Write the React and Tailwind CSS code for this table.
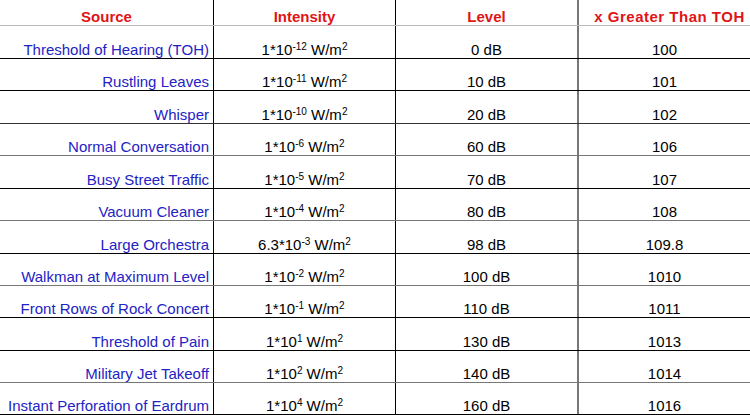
const rows = [
  { src: "Threshold of Hearing (TOH)", base: "1*10", exp: "-12", level: "0 dB", times: "100", h: "h-[33px]", line: "border-black" },
  { src: "Rustling Leaves", base: "1*10", exp: "-11", level: "10 dB", times: "101", h: "h-[32px]", line: "border-black" },
  { src: "Whisper", base: "1*10", exp: "-10", level: "20 dB", times: "102", h: "h-[33px]", line: "border-[#333]" },
  { src: "Normal Conversation", base: "1*10", exp: "-6", level: "60 dB", times: "106", h: "h-[32px]", line: "border-[#777]" },
  { src: "Busy Street Traffic", base: "1*10", exp: "-5", level: "70 dB", times: "107", h: "h-[33px]", line: "border-black" },
  { src: "Vacuum Cleaner", base: "1*10", exp: "-4", level: "80 dB", times: "108", h: "h-[32px]", line: "border-[#777]" },
  { src: "Large Orchestra", base: "6.3*10", exp: "-3", level: "98 dB", times: "109.8", h: "h-[33px]", line: "border-black" },
  { src: "Walkman at Maximum Level", base: "1*10", exp: "-2", level: "100 dB", times: "1010", h: "h-[32px]", line: "border-[#777]" },
  { src: "Front Rows of Rock Concert", base: "1*10", exp: "-1", level: "110 dB", times: "1011", h: "h-[32px]", line: "border-black" },
  { src: "Threshold of Pain", base: "1*10", exp: "1", level: "130 dB", times: "1013", h: "h-[33px]", line: "border-black" },
  { src: "Military Jet Takeoff", base: "1*10", exp: "2", level: "140 dB", times: "1014", h: "h-[32px]", line: "border-[#777]" },
  { src: "Instant Perforation of Eardrum", base: "1*10", exp: "4", level: "160 dB", times: "1016", h: "h-[32px]", line: "border-black" },
];

const cols = "grid grid-cols-[214px_182px_183px_171px]";

function Header() {
  return (
    <div className={`${cols} h-[26px] border-b border-[#bbb] text-[15px] leading-[17px] font-bold text-[#e01515]`}>
      <div className="flex items-end justify-center border-r border-black">Source</div>
      <div className="flex items-end justify-center border-r border-black">Intensity</div>
      <div className="flex items-end justify-center border-r-2 border-[#777]">Level</div>
      <div className="flex items-end justify-center pl-[10px] tracking-[0.5px] whitespace-nowrap">x Greater Than TOH</div>
    </div>
  );
}

function Row({ r }) {
  return (
    <div className={`${cols} ${r.h} border-b ${r.line} text-[15px] leading-[17px]`}>
      <div className="flex items-end justify-end pr-[4px] border-r border-black text-[#2323c4] whitespace-nowrap">
        {r.src}
      </div>
      <div className="flex items-end justify-center border-r border-black text-black whitespace-nowrap">
        <span>
          {r.base}
          <sup className="text-[10px]">{r.exp}</sup> W/m<sup className="text-[10px]">2</sup>
        </span>
      </div>
      <div className="flex items-end justify-center border-r-2 border-[#777] text-black">{r.level}</div>
      <div className="flex items-end justify-center text-black">{r.times}</div>
    </div>
  );
}

export default function App() {
  return (
    <div className="w-[750px] h-[415px] overflow-hidden bg-white font-['Liberation_Sans',Arial,sans-serif]">
      <Header />
      {rows.map((r) => (
        <Row key={r.src} r={r} />
      ))}
    </div>
  );
}
